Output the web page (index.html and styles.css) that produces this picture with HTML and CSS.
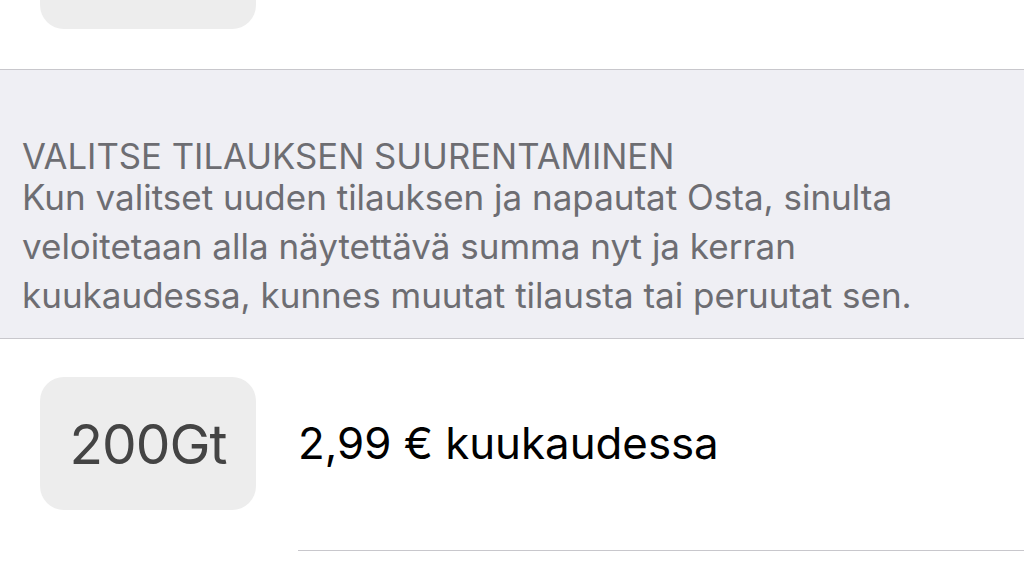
FILE: index.html
```html
<!DOCTYPE html>
<html lang="fi">
<head>
<meta charset="utf-8">
<link rel="stylesheet" href="styles.css">
</head>
<body>
<div class="screen">
  <div class="item item-top">
    <div class="size-box"></div>
  </div>
  <div class="section-header">
    <div class="header-title">VALITSE TILAUKSEN SUURENTAMINEN</div>
    <div class="header-text">Kun valitset uuden tilauksen ja napautat Osta, sinulta veloitetaan alla näytettävä summa nyt ja kerran kuukaudessa, kunnes muutat tilausta tai peruutat sen.</div>
  </div>
  <div class="item">
    <div class="size-box">200Gt</div>
    <div class="price">2,99 € kuukaudessa</div>
  </div>
  <div class="separator"></div>
</div>
</body>
</html>
```

FILE: styles.css
```css
html, body {
  margin: 0;
  padding: 0;
  background: #ffffff;
}
.screen {
  width: 1024px;
  height: 576px;
  overflow: hidden;
  font-family: Inter, "Liberation Sans", sans-serif;
  background: #ffffff;
}
.item {
  display: flex;
  align-items: center;
  gap: 42px;
  padding: 38px 0 40px 40px;
}
.item-top {
  height: 69px;
  box-sizing: border-box;
  padding: 0 0 40px 40px;
  align-items: flex-end;
  overflow: hidden;
}
.size-box {
  flex: none;
  width: 216px;
  height: 133px;
  border-radius: 24px;
  background: #ededed;
  display: flex;
  align-items: center;
  justify-content: center;
  font-size: 55px;
  color: #444444;
  letter-spacing: -1px;
}
.section-header {
  background: #efeff4;
  border-top: 1px solid #c8c7cc;
  border-bottom: 1px solid #c8c7cc;
  height: 270px;
  box-sizing: border-box;
  padding: 69px 40px 0 22px;
  color: #6d6d72;
}
.header-title {
  font-size: 34.7px;
  line-height: 34px;
}
.header-text {
  font-size: 35px;
  line-height: 49px;
  margin-top: 0;
  width: 940px;
}
.price {
  font-size: 43.8px;
  color: #000000;
}
.separator {
  margin-left: 298px;
  border-top: 1px solid #c8c7cc;
}
```
